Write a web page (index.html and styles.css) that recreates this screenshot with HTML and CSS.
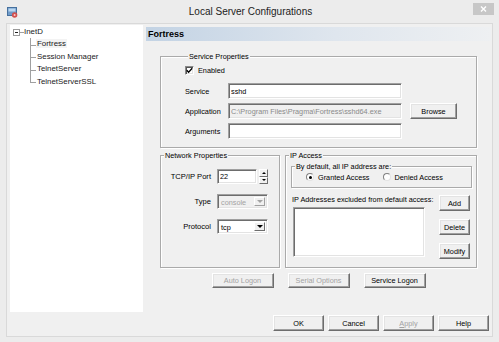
FILE: index.html
```html
<!DOCTYPE html>
<html lang="en">
<head>
  <meta charset="UTF-8" />
  <meta name="viewport" content="width=device-width, initial-scale=1.0" />
  <title>Local Server Configurations</title>
  <link rel="stylesheet" href="styles.css">
</head>
<body>
  <div class="window">
    <div class="titlebar">
      <svg class="app-icon" width="11" height="11" viewBox="0 0 11 11">
        <rect x="0.5" y="0.5" width="9" height="8" fill="#6f9bc9" stroke="#46709e" />
        <rect x="1.5" y="1.5" width="7" height="3" fill="#b9d7f2" />
        <circle cx="7.6" cy="8" r="2.7" fill="#d2504e" />
        <circle cx="7.6" cy="8" r="1" fill="#f6caca" />
      </svg>
      <span class="title">Local Server Configurations</span>
      <span class="close">
        <svg width="7" height="6" viewBox="0 0 7 6">
          <path d="M1 0.5 L6 5.5 M6 0.5 L1 5.5" stroke="#fff" stroke-width="1.4" />
        </svg>
      </span>
    </div>

    <div class="client">
      <div class="main">
        <ul class="tree">
          <li class="root">
            <div class="root-row"><span class="expander"></span><span class="stub"></span>InetD</div>
            <ul class="children">
              <li><span class="selected">Fortress</span></li>
              <li>Session Manager</li>
              <li>TelnetServer</li>
              <li>TelnetServerSSL</li>
            </ul>
          </li>
        </ul>

        <div class="pane">
          <div class="pane-head">Fortress</div>
          <div class="pane-body">
            <div class="group service">
              <div class="group-title">Service Properties</div>
              <div class="service-grid">
                <div class="check-row"><span class="checkbox">
                  <svg width="7" height="7" viewBox="0 0 7 7"><path d="M0.8 3.2 L2.6 5.2 L6.2 1.2" fill="none" stroke="#000" stroke-width="1.3" /></svg>
                </span>Enabled</div>

                <span class="label">Service</span>
                <input class="field" type="text" value="sshd">
                <span></span>

                <span class="label">Application</span>
                <input class="field readonly" type="text" value="C:\Program Files\Pragma\Fortress\sshd64.exe" readonly>
                <button class="btn browse">Browse</button>

                <span class="label">Arguments</span>
                <input class="field" type="text" value="">
                <span></span>
              </div>
            </div>

            <div class="row2">
              <div class="group network">
                <div class="group-title">Network Properties</div>
                <div class="net-grid">
                  <span class="net-label">TCP/IP Port</span>
                  <div class="port">
                    <input class="field port-field" type="text" value="22">
                    <div class="spin">
                      <span class="spin-btn"><span class="tri-up"></span></span>
                      <span class="spin-btn"><span class="tri-down"></span></span>
                    </div>
                  </div>

                  <span class="net-label">Type</span>
                  <div class="select disabled">
                    <span class="select-text">console</span>
                    <span class="select-btn"><span class="tri-down big"></span></span>
                  </div>

                  <span class="net-label">Protocol</span>
                  <div class="select">
                    <span class="select-text">tcp</span>
                    <span class="select-btn"><span class="tri-down big"></span></span>
                  </div>
                </div>
              </div>

              <div class="group ip">
                <div class="group-title">IP Access</div>
                <div class="group inner">
                  <div class="group-title">By default, all IP address are:</div>
                  <div class="radio-row">
                    <span class="radio-item"><span class="radio on"><span class="dot"></span></span>Granted Access</span>
                    <span class="radio-item"><span class="radio"></span>Denied Access</span>
                  </div>
                </div>
                <div class="ip-lower">
                  <div class="ip-list">
                    <div class="ip-caption">IP Addresses excluded from default access:</div>
                    <div class="listbox"></div>
                  </div>
                  <div class="ip-buttons">
                    <button class="btn">Add</button>
                    <button class="btn">Delete</button>
                    <button class="btn">Modify</button>
                  </div>
                </div>
              </div>
            </div>

            <div class="extra">
              <button class="btn" disabled>Auto Logon</button>
              <button class="btn" disabled>Serial Options</button>
              <button class="btn">Service Logon</button>
            </div>
          </div>
        </div>
      </div>

      <div class="actions">
        <button class="btn">OK</button>
        <button class="btn">Cancel</button>
        <button class="btn" disabled><u>A</u>pply</button>
        <button class="btn">Help</button>
      </div>
    </div>
  </div>
</body>
</html>
```

FILE: styles.css
```css
* {
  box-sizing: border-box;
}
body {
  margin: 0;
  font-family: "Liberation Sans", Arial, sans-serif;
  font-size: 7.3px;
  color: #000;
  background: #ececec;
}
.window {
  width: 499px;
  height: 342px;
  background: #ececec;
  display: flex;
  flex-direction: column;
}

/* title bar */
.titlebar {
  height: 23px;
  display: grid;
  grid-template-columns: 1fr auto 1fr;
  align-items: center;
  padding: 0 5px 0 7px;
}
.app-icon {
  display: block;
  margin-top: 1px;
}
.title {
  font-size: 10px;
  color: #222;
}
.close {
  justify-self: end;
  align-self: start;
  margin-top: 3px;
  width: 21px;
  height: 12px;
  background: #c7c7c7;
  display: flex;
  align-items: center;
  justify-content: center;
}
.close svg {
  display: block;
}

/* client area */
.client {
  flex: 1;
  margin: 0 6px 5px;
  border: 1px solid #d9d9d9;
  background: #f0f0f0;
  display: flex;
  flex-direction: column;
}
.main {
  display: flex;
  gap: 3px;
  padding: 1px 0 0 3px;
}

/* tree */
.tree, .tree ul {
  list-style: none;
  margin: 0;
  padding: 0;
}
.tree {
  width: 133px;
  height: 287px;
  background: #fff;
  font-size: 7.9px;
  line-height: 12.4px;
  padding-top: 1px;
  color: #1a1a1a;
}
.root-row {
  display: flex;
  align-items: center;
  padding-left: 3px;
  height: 12.4px;
}
.expander {
  width: 7px;
  height: 7px;
  border: 1px solid #9a9a9a;
  background: #fff;
  display: flex;
  align-items: center;
  justify-content: center;
}
.expander::before {
  content: "";
  width: 3px;
  height: 1px;
  background: #222;
}
.stub {
  width: 4px;
  height: 1px;
  background: #a0a0a0;
}
.children {
  margin-left: 20px !important;
}
.children li {
  position: relative;
  padding-left: 7px;
  height: 12.4px;
}
.children li::before {
  content: "";
  position: absolute;
  left: 0;
  top: 0;
  width: 5px;
  height: 6.7px;
  border-left: 1px solid #a0a0a0;
  border-bottom: 1px solid #a0a0a0;
}
.children li::after {
  content: "";
  position: absolute;
  left: 0;
  top: 6.2px;
  bottom: -0.5px;
  border-left: 1px solid #a0a0a0;
}
.children li:last-child::after {
  display: none;
}
.selected {
  background: #f3f3f3;
  padding: 0 1px;
  margin-left: -1px;
}

/* right pane */
.pane {
  width: 345px;
  margin-top: 2px;
}
.pane-head {
  height: 14px;
  line-height: 14px;
  padding-left: 2px;
  font-size: 9px;
  font-weight: bold;
  background: linear-gradient(to right, #c3d3e4, #dfe6ee 55%, #eef0f2);
}
.pane-body {
  padding: 15px 0 0 14px;
}

/* group boxes */
.group {
  border: 1px solid #aaaaaa;
  box-shadow: inset 1px 1px 0 #fff, 1px 1px 0 #fff;
}
.group-title {
  display: table;
  margin: -5px 0 0 3px;
  padding: 0 1px;
  line-height: 9px;
  background: #f0f0f0;
}

.service {
  width: 317px;
  padding: 0 0 8px 24px;
}
.service-grid {
  display: grid;
  grid-template-columns: 43px 174px 55px;
  row-gap: 4px;
  align-items: center;
  margin-top: 4px;
}
.check-row {
  grid-column: 1 / -1;
  height: 10px;
  display: flex;
  align-items: center;
  gap: 4px;
  margin-bottom: 4px;
}
.checkbox {
  width: 9px;
  height: 9px;
  background: #fff;
  border: 1px solid;
  border-color: #8a8a8a #fff #fff #8a8a8a;
  box-shadow: inset 1px 1px 0 #555, inset -1px -1px 0 #e3e3e3;
  display: flex;
  align-items: center;
  justify-content: center;
}
.checkbox svg {
  display: block;
}

.field {
  font: inherit;
  height: 16px;
  padding: 0 2px;
  margin: 0;
  border: 1px solid;
  border-color: #a0a0a0 #fff #fff #a0a0a0;
  box-shadow: inset 1px 1px 0 #6d6d6d, inset -1px -1px 0 #e3e3e3;
  background: #fff;
  color: #000;
  outline: none;
}
.field.readonly {
  background: #f0f0f0;
  color: #8a8a8a;
}

/* buttons */
.btn {
  font: inherit;
  margin: 0;
  padding: 0;
  color: #000;
  background: #f0f0f0;
  border: 1px solid;
  border-color: #fff #6d6d6d #6d6d6d #fff;
  box-shadow: inset -1px -1px 0 #a0a0a0, inset 1px 1px 0 #e3e3e3;
  height: 16px;
}
.btn:disabled {
  color: #a3a3a3;
}
.browse {
  margin-left: 8px;
  width: 47px;
}

.row2 {
  display: flex;
  gap: 5px;
  margin-top: 7px;
}
.network {
  width: 120px;
  height: 113px;
}
.ip {
  width: 192px;
  height: 113px;
}

/* network properties */
.net-grid {
  display: grid;
  grid-template-columns: 45px 51px;
  column-gap: 6px;
  row-gap: 10px;
  grid-auto-rows: 15px;
  align-items: center;
  margin: 9px 0 0 5px;
}
.net-label {
  text-align: right;
  font-size: 7.6px;
}
.port {
  display: flex;
  gap: 2px;
  height: 15px;
}
.port-field {
  width: 40px;
  height: 15px;
}
.spin {
  width: 11px;
  display: flex;
  flex-direction: column;
}
.spin-btn {
  flex: 1;
  background: #f0f0f0;
  border: 1px solid;
  border-color: #fff #6d6d6d #6d6d6d #fff;
  display: flex;
  align-items: center;
  justify-content: center;
}
.tri-up {
  border-left: 2px solid transparent;
  border-right: 2px solid transparent;
  border-bottom: 2px solid #000;
}
.tri-down {
  border-left: 2px solid transparent;
  border-right: 2px solid transparent;
  border-top: 2px solid #000;
}
.tri-down.big {
  border-left-width: 3px;
  border-right-width: 3px;
  border-top-width: 3px;
}
.select {
  width: 51px;
  height: 15px;
  display: flex;
  padding: 2px;
  border: 1px solid;
  border-color: #a0a0a0 #fff #fff #a0a0a0;
  box-shadow: inset 1px 1px 0 #6d6d6d, inset -1px -1px 0 #e3e3e3;
  background: #fff;
}
.select-text {
  flex: 1;
  line-height: 11px;
  padding-left: 1px;
}
.select-btn {
  width: 11px;
  background: #f0f0f0;
  border: 1px solid;
  border-color: #fff #6d6d6d #6d6d6d #fff;
  display: flex;
  align-items: center;
  justify-content: center;
}
.select.disabled {
  background: #f0f0f0;
  color: #a3a3a3;
}
.select.disabled .tri-down {
  border-top-color: #a3a3a3;
}
.select.disabled .select-btn {
  border-color: #fff #a0a0a0 #a0a0a0 #fff;
}

/* ip access */
.inner {
  width: 181px;
  margin: 6px 0 0 5px;
  padding-bottom: 5px;
}
.radio-row {
  display: flex;
  gap: 13px;
  height: 10px;
  align-items: center;
  margin-top: 1px;
  padding-left: 14px;
}
.radio-item {
  display: flex;
  align-items: center;
  gap: 4px;
}
.radio {
  width: 8px;
  height: 8px;
  border-radius: 50%;
  background: #fff;
  border: 1px solid;
  border-color: #808080 #e3e3e3 #e3e3e3 #808080;
  display: flex;
  align-items: center;
  justify-content: center;
}
.dot {
  width: 3px;
  height: 3px;
  border-radius: 50%;
  background: #000;
}
.ip-lower {
  display: flex;
  margin-top: 7px;
  padding-left: 6px;
}
.ip-list {
  width: 147px;
}
.ip-caption {
  line-height: 9px;
  white-space: nowrap;
}
.listbox {
  width: 132px;
  height: 50px;
  margin: 3px 0 0 1px;
  background: #fff;
  border: 1px solid;
  border-color: #a0a0a0 #fff #fff #a0a0a0;
  box-shadow: inset 1px 1px 0 #6d6d6d, inset -1px -1px 0 #e3e3e3;
}
.ip-buttons {
  width: 31px;
  display: flex;
  flex-direction: column;
  gap: 8px;
}

/* bottom button rows */
.extra {
  width: 317px;
  display: flex;
  justify-content: center;
  gap: 14px;
  margin-top: 5px;
}
.extra .btn {
  width: 62px;
  height: 15px;
}
.actions {
  display: flex;
  justify-content: flex-end;
  gap: 4px;
  padding: 3px 3px 0 0;
}
.actions .btn {
  width: 51px;
}
```
